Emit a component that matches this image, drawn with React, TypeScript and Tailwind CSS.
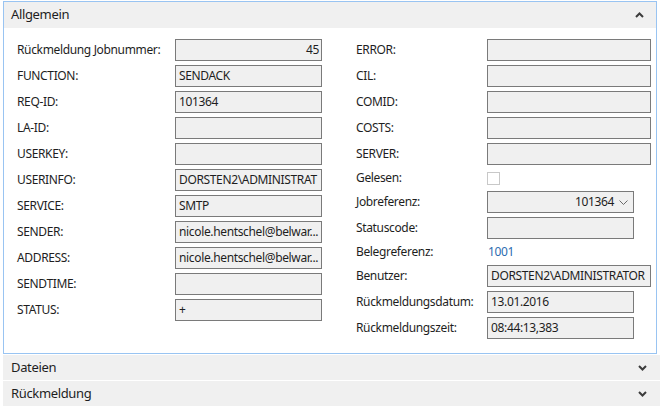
import React from 'react';

const font = { fontFamily: '"Segoe UI", "Noto Sans", "Open Sans", sans-serif' };

type Row =
  | { kind: 'input'; label: string; value?: string; width: string; right?: boolean }
  | { kind: 'check'; label: string }
  | { kind: 'combo'; label: string; value: string }
  | { kind: 'text'; label: string; value: string };

const leftRows: Row[] = [
  { kind: 'input', label: 'Rückmeldung Jobnummer:', value: '45', width: 'w-[147px]', right: true },
  { kind: 'input', label: 'FUNCTION:', value: 'SENDACK', width: 'w-[147px]' },
  { kind: 'input', label: 'REQ-ID:', value: '101364', width: 'w-[147px]' },
  { kind: 'input', label: 'LA-ID:', width: 'w-[147px]' },
  { kind: 'input', label: 'USERKEY:', width: 'w-[147px]' },
  { kind: 'input', label: 'USERINFO:', value: 'DORSTEN2\\ADMINISTRAT', width: 'w-[147px]' },
  { kind: 'input', label: 'SERVICE:', value: 'SMTP', width: 'w-[147px]' },
  { kind: 'input', label: 'SENDER:', value: 'nicole.hentschel@belwar...', width: 'w-[147px]' },
  { kind: 'input', label: 'ADDRESS:', value: 'nicole.hentschel@belwar...', width: 'w-[147px]' },
  { kind: 'input', label: 'SENDTIME:', width: 'w-[147px]' },
  { kind: 'input', label: 'STATUS:', value: '+', width: 'w-[147px]' },
];

const rightRows: Row[] = [
  { kind: 'input', label: 'ERROR:', width: 'w-[164px]' },
  { kind: 'input', label: 'CIL:', width: 'w-[164px]' },
  { kind: 'input', label: 'COMID:', width: 'w-[164px]' },
  { kind: 'input', label: 'COSTS:', width: 'w-[164px]' },
  { kind: 'input', label: 'SERVER:', width: 'w-[164px]' },
  { kind: 'check', label: 'Gelesen:' },
  { kind: 'combo', label: 'Jobreferenz:', value: '101364' },
  { kind: 'input', label: 'Statuscode:', width: 'w-[147px]' },
  { kind: 'text', label: 'Belegreferenz:', value: '1001' },
  { kind: 'input', label: 'Benutzer:', value: 'DORSTEN2\\ADMINISTRATOR', width: 'w-[164px]' },
  { kind: 'input', label: 'Rückmeldungsdatum:', value: '13.01.2016', width: 'w-[147px]' },
  { kind: 'input', label: 'Rückmeldungszeit:', value: '08:44:13,383', width: 'w-[147px]' },
];

const Caret = ({ up }: { up?: boolean }) => (
  <svg width="9" height="6" viewBox="0 0 9 6" className="text-[#3c3c3c]">
    <polyline
      points={up ? '1,5 4.5,1.5 8,5' : '1,1 4.5,4.5 8,1'}
      fill="none"
      stroke="currentColor"
      strokeWidth="2"
    />
  </svg>
);

const Field = ({ row, labelW }: { row: Row; labelW: string }) => {
  const label = <div className={`${labelW} shrink-0 text-[12px] text-[#1e1e1e] whitespace-nowrap`}>{row.label}</div>;
  if (row.kind === 'check') {
    return (
      <div className="flex items-center h-[18px]">
        {label}
        <div className="w-[13px] h-[13px] border border-[#c8c8c8] bg-white mt-[1px]" />
      </div>
    );
  }
  if (row.kind === 'text') {
    return (
      <div className="flex items-center h-[18px]">
        {label}
        <div className="text-[12px] text-[#2d6cb0] pl-[1px]">{row.value}</div>
      </div>
    );
  }
  if (row.kind === 'combo') {
    return (
      <div className="flex items-center h-[22px]">
        {label}
        <div className="w-[147px] h-[22px] border border-[#7a7a7a] bg-[#f0f0f0] flex items-center justify-end pr-[5px] gap-[5px] text-[12px] text-[#1e1e1e]">
          <span>{row.value}</span>
          <svg width="9" height="5" viewBox="0 0 9 5">
            <polyline points="0.5,0.5 4.5,4.5 8.5,0.5" fill="none" stroke="#6a6a6a" strokeWidth="1" />
          </svg>
        </div>
      </div>
    );
  }
  return (
    <div className="flex items-center h-[22px]">
      {label}
      <div
        className={`${row.width} h-[22px] border border-[#7a7a7a] bg-[#f0f0f0] flex items-center pl-[3px] pr-[2px] text-[12px] text-[#1e1e1e] whitespace-nowrap ${row.right ? 'justify-end' : ''}`}
      >
        <span>{row.value}</span>
      </div>
    </div>
  );
};

const Band = ({ title }: { title: string }) => (
  <div className="h-[25px] w-[657px] bg-[#f0f0f0] flex items-center justify-between pl-[8px] pr-[13px]">
    <span className="text-[13px] text-[#1e1e1e]">{title}</span>
    <Caret />
  </div>
);

const App = () => {
  return (
    <div className="w-[663px] h-[411px] bg-white overflow-hidden pt-[1px] pl-[3px] tracking-[-0.35px]" style={font}>
      <div className="w-[654px] border border-[#99c4f2]">
        <div className="h-[26px] bg-[#f0f0f0] flex items-center justify-between pl-[7px] pr-[12px]">
          <span className="text-[13px] text-[#1e1e1e]">Allgemein</span>
          <Caret up />
        </div>
        <div className="flex pt-[11px] pb-[14px] pl-[13px]">
          <div className="flex flex-col gap-[4px] w-[305px]">
            {leftRows.map((r) => (
              <Field key={r.label} row={r} labelW="w-[158px]" />
            ))}
          </div>
          <div className="flex flex-col gap-[4px] ml-[34px]">
            {rightRows.map((r) => (
              <Field key={r.label} row={r} labelW="w-[131px]" />
            ))}
          </div>
        </div>
      </div>
      <div className="mt-[1px] flex flex-col gap-[1px]">
        <Band title="Dateien" />
        <Band title="Rückmeldung" />
      </div>
    </div>
  );
};

export default App;
